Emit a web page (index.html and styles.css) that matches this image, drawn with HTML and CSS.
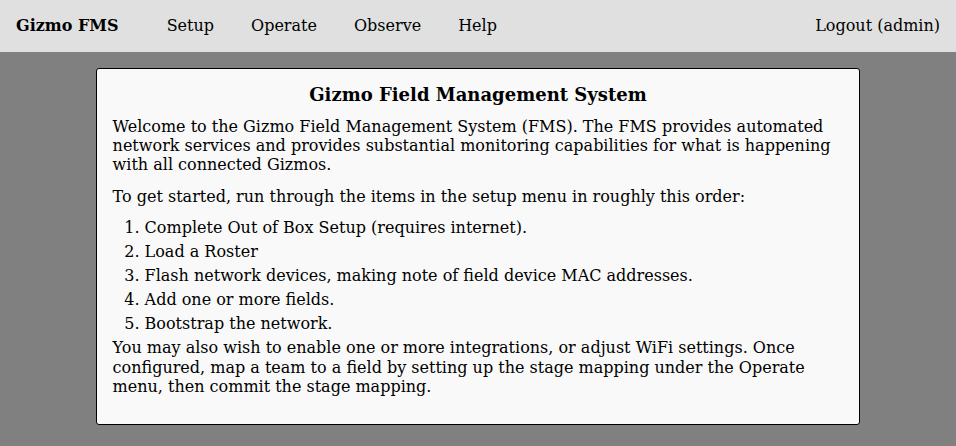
FILE: index.html
```html
<!DOCTYPE html>
<html>
<head>
<meta charset="utf-8">
<link rel="stylesheet" href="styles.css">
</head>
<body>
<header class="topbar">
  <span class="brand">Gizmo FMS</span>
  <nav class="nav">
    <a class="nav-link">Setup</a>
    <a class="nav-link">Operate</a>
    <a class="nav-link">Observe</a>
    <a class="nav-link">Help</a>
  </nav>
  <a class="logout">Logout (admin)</a>
</header>
<main class="card">
  <h2 class="title">Gizmo Field Management System</h2>
  <p class="para">Welcome to the Gizmo Field Management System (FMS). The FMS provides automated network services and provides substantial monitoring capabilities for what is happening with all connected Gizmos.</p>
  <p class="para">To get started, run through the items in the setup menu in roughly this order:</p>
  <ol class="steps">
    <li>Complete Out of Box Setup (requires internet).</li>
    <li>Load a Roster</li>
    <li>Flash network devices, making note of field device MAC addresses.</li>
    <li>Add one or more fields.</li>
    <li>Bootstrap the network.</li>
  </ol>
  <p class="para last">You may also wish to enable one or more integrations, or adjust WiFi settings. Once configured, map a team to a field by setting up the stage mapping under the Operate menu, then commit the stage mapping.</p>
</main>
</body>
</html>
```
FILE: styles.css
```css
html, body {
  margin: 0;
  padding: 0;
}
body {
  background: #808080;
  font-family: "DejaVu Serif", serif;
  font-size: 16px;
  color: #000;
  min-height: 446px;
}
.topbar {
  display: flex;
  align-items: flex-start;
  height: 52px;
  box-sizing: border-box;
  padding: 15.5px 16px 0 16px;
  background: #e0e0e0;
  line-height: 19.2px;
}
.brand {
  font-weight: bold;
  margin-right: 48px;
}
.nav {
  display: flex;
  gap: 37px;
}
.logout {
  margin-left: auto;
}
.card {
  display: block;
  width: 80%;
  box-sizing: border-box;
  margin: 16px auto 0 auto;
  background: #f9f9f9;
  border: 1px solid #000;
  border-radius: 3px;
  padding: 15px 16px 16px 16px;
  line-height: 19.4px;
}
.title {
  margin: 0 0 11.5px 0;
  font-size: 18px;
  line-height: 21px;
  text-align: center;
}
.para {
  margin: 0 0 12px 0;
}
.steps {
  margin: 0 0 1px 0;
  padding-left: 32px;
}
.steps li {
  margin-bottom: 4.6px;
}
```
